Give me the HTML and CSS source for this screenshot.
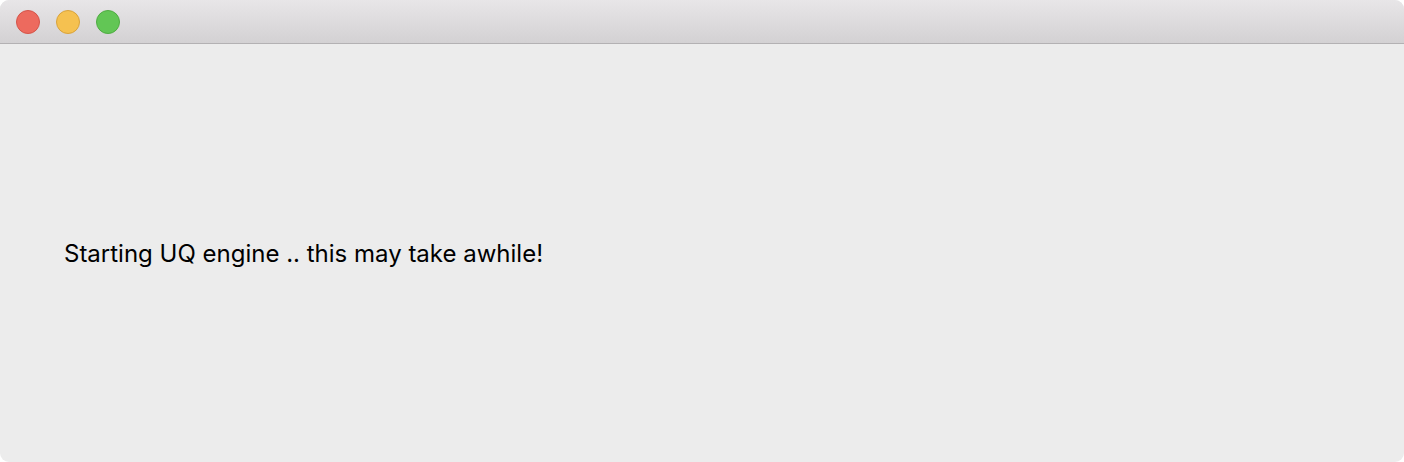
FILE: index.html
```html
<!DOCTYPE html>
<html>
<head>
<meta charset="utf-8">
<link rel="stylesheet" href="styles.css">
</head>
<body>
<div class="window">
  <div class="titlebar">
    <span class="light red"></span>
    <span class="light yellow"></span>
    <span class="light green"></span>
  </div>
  <div class="content">
    <p class="message">Starting UQ engine .. this may take awhile!</p>
  </div>
</div>
</body>
</html>
```
FILE: styles.css
```css
html, body {
  margin: 0;
  padding: 0;
  background: #ffffff;
}
.window {
  width: 1404px;
  height: 462px;
  display: flex;
  flex-direction: column;
  border-radius: 9px;
  overflow: hidden;
  background: #ececec;
}
.titlebar {
  height: 44px;
  flex: none;
  display: flex;
  align-items: center;
  gap: 16px;
  padding-left: 16px;
  padding-top: 1px;
  box-sizing: border-box;
  background: linear-gradient(#e8e6e8, #d3d1d3);
  border-bottom: 1px solid #b3b1b3;
}
.light {
  width: 24px;
  height: 24px;
  border-radius: 50%;
  box-sizing: border-box;
}
.red { background: #ed6a5e; border: 1px solid #d55449; }
.yellow { background: #f5c150; border: 1px solid #d9a33b; }
.green { background: #62c655; border: 1px solid #4fac42; }
.content {
  flex: 1;
  display: flex;
  align-items: flex-start;
  padding-left: 64px;
  padding-top: 195px;
}
.message {
  margin: 0;
  font-family: Inter, "Liberation Sans", Arial, sans-serif;
  font-size: 24px;
  line-height: 29px;
  color: #000;
}
```
